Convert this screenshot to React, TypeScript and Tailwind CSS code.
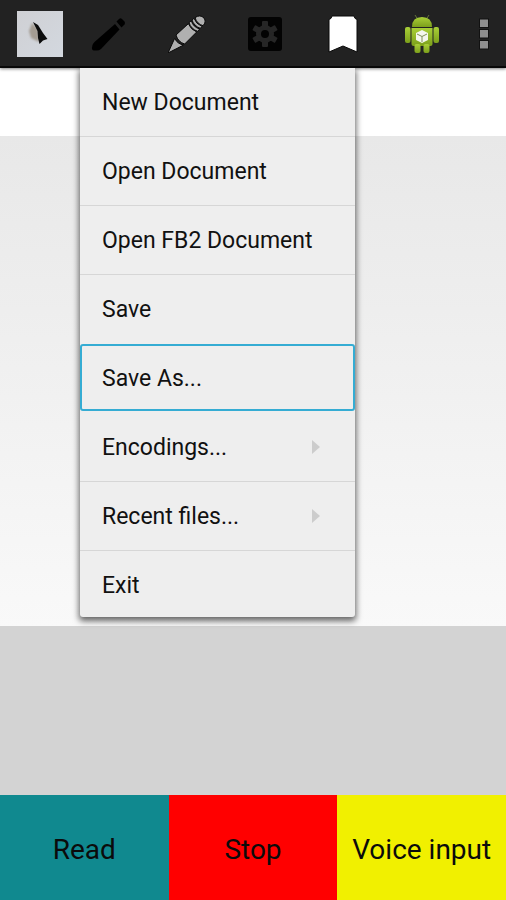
import type { ReactNode } from "react";

type MenuEntry = { label: string; submenu?: boolean; focused?: boolean };

const menuEntries: MenuEntry[] = [
  { label: "New Document" },
  { label: "Open Document" },
  { label: "Open FB2 Document" },
  { label: "Save" },
  { label: "Save As...", focused: true },
  { label: "Encodings...", submenu: true },
  { label: "Recent files...", submenu: true },
  { label: "Exit" },
];

function AppIcon() {
  return (
    <svg viewBox="0 0 46 46" className="size-[46px]" aria-hidden="true">
      <defs>
        <linearGradient id="paper" x1="0" y1="0" x2="1" y2="1">
          <stop offset="0" stopColor="#cfd0d4" />
          <stop offset="1" stopColor="#d3d8df" />
        </linearGradient>
        <filter id="soft" x="-50%" y="-50%" width="200%" height="200%">
          <feGaussianBlur stdDeviation="1.2" />
        </filter>
      </defs>
      <rect width="46" height="46" fill="url(#paper)" />
      <path d="M15 12 L12 20 L14 27 L22 31 L21 18Z" fill="#a49c92" filter="url(#soft)" />
      <path d="M16 11 L21 14 L26 22 L30.500 28 L26 29.500 L22.500 33 L21 27 L20.500 20Z" fill="#0c0c0c" />
    </svg>
  );
}

function BlackPencil() {
  return (
    <svg viewBox="0 0 36 36" className="size-9" aria-hidden="true">
      <g fill="#000">
        <path d="M25 8 L29.500 13.500 L11 33 Q9 34.500 7 34.500 L4 34.500 Q1.500 34 2 31.500 L2.500 29 Q3 27.500 4.500 26Z" />
        <path d="M26.500 5.500 L29 3 Q30.500 1.500 32 3 L34.500 5.500 Q35.500 7 34.500 8.500 L31.500 11.500Z" />
      </g>
    </svg>
  );
}

function GreyPencil() {
  return (
    <svg viewBox="50 43 114 114" className="size-[38px]" aria-hidden="true">
      <g fill="#b0b0b0" stroke="#090909" strokeWidth="3">
        <path d="M50 157 L70 113 Q78 130 97 133Z" />
        <path d="M74 103 L111 69 Q118 86 136 94 L100 130 Q80 124 74 103Z" />
        <path d="M113 66 L120 60 Q125 79 145 85 L139 92 Q119 85 113 66Z" />
        <path d="M122 58 L128 53 Q134 70 152 77 L147 83 Q128 76 122 58Z" />
        <path d="M131 51 Q146 40 158 52 Q166 64 155 75 Q137 70 131 51Z" />
      </g>
    </svg>
  );
}

function Settings() {
  return (
    <svg viewBox="0 0 34 34" className="size-[34px]" aria-hidden="true">
      <rect width="34" height="34" rx="3" fill="#030303" />
      <g fill="#262626">
        <circle cx="17" cy="17" r="9" />
        <rect x="14" y="4" width="6" height="26" rx="1" />
        <rect x="14" y="4" width="6" height="26" rx="1" transform="rotate(60 17 17)" />
        <rect x="14" y="4" width="6" height="26" rx="1" transform="rotate(120 17 17)" />
      </g>
      <circle cx="17" cy="17" r="4" fill="#030303" />
    </svg>
  );
}

function BookmarkIcon() {
  return (
    <svg viewBox="0 0 30 38" className="h-[38px] w-[30px]" aria-hidden="true">
      <path
        d="M4 1 H26 Q26.500 4 29 4.500 V37 L15 31 L1 37 V4.500 Q3.500 4 4 1Z"
        fill="#fff"
        stroke="#080808"
        strokeWidth="1"
      />
    </svg>
  );
}

function Robot() {
  return (
    <svg viewBox="0 0 36 40" className="h-10 w-9" aria-hidden="true">
      <defs>
        <linearGradient id="green" x1="0" y1="0" x2="0" y2="1">
          <stop offset="0" stopColor="#a9cf38" />
          <stop offset="1" stopColor="#7c9f1b" />
        </linearGradient>
      </defs>
      <path d="M11 1 L13.500 5 M25 1 L22.500 5" stroke="#64753a" strokeWidth="1" />
      <g fill="url(#green)">
        <path d="M8 13 Q8 3 18 3 Q28 3 28 13Z" />
        <rect x="1" y="13" width="5.500" height="16" rx="2" />
        <rect x="29.500" y="13" width="5.500" height="16" rx="2" />
        <path d="M7.500 14 H28.500 V30 Q28.500 32 26.500 32 H9.500 Q7.500 32 7.500 30Z" />
        <rect x="10.500" y="30" width="6" height="9" rx="2" />
        <rect x="19.500" y="30" width="6" height="9" rx="2" />
      </g>
      <path d="M18 16 L24 19 V26 L18 29 L12 26 V19Z" fill="#f4f6ee" />
      <path d="M13 20 L18 22.500 L23 20 M18 22.500 V28" fill="none" stroke="#7f8f58" strokeWidth="1" />
    </svg>
  );
}

function Overflow() {
  return (
    <svg viewBox="0 0 10 32" className="h-8 w-[10px]" aria-hidden="true">
      <g fill="#8e8e8e" stroke="#111" strokeWidth="1">
        <rect x="0.500" y="1" width="9" height="8.500" />
        <rect x="0.500" y="11.500" width="9" height="8.500" />
        <rect x="0.500" y="22.500" width="9" height="8.500" />
      </g>
    </svg>
  );
}

function Action({ label, children }: { label: string; children: ReactNode }) {
  return (
    <button type="button" aria-label={label} className="flex flex-1 items-center justify-center">
      {children}
    </button>
  );
}

function FileMenu() {
  return (
    <ul
      role="menu"
      className="absolute top-[68px] left-20 w-[275px] rounded-b-[3px] bg-[#eeeeee] shadow-[0_3px_6px_1px_rgba(0,0,0,0.6)] [clip-path:inset(0_-16px_-16px_-16px)]"
    >
      {menuEntries.map((entry) => (
        <li
          key={entry.label}
          role="none"
          className={
            entry.focused
              ? "h-[69px]"
              : "h-[69px] border-b border-[#d6d6d6] last:h-[66px] last:border-b-0 nth-4:border-transparent"
          }
        >
          <button
            type="button"
            role="menuitem"
            className={
              entry.focused
                ? "flex h-[67px] w-full items-center justify-between rounded-[3px] border-2 border-[#35acd3] pr-8 pl-5 text-left"
                : "flex h-[67px] w-full items-center justify-between pr-[35px] pl-[22px] text-left"
            }
          >
            <span className="pt-0.5">{entry.label}</span>
            {entry.submenu && (
              <svg viewBox="0 0 8 14" className="h-[14px] w-2" aria-hidden="true">
                <path d="M0 0 L8 7 L0 14Z" fill="#cccccc" />
              </svg>
            )}
          </button>
        </li>
      ))}
    </ul>
  );
}

export default function App() {
  return (
    <div className="flex min-h-screen flex-col bg-[#d3d3d3] font-[Roboto,sans-serif] text-[23px] leading-7 text-[#111111]">
      <header className="relative z-10 flex h-[68px] border-b-2 border-[#080808] bg-[#222222] pt-0.5 shadow-[0_1px_3px_rgba(0,0,0,0.5)]">
        <button type="button" aria-label="File" className="flex w-[69px] items-center pl-[17px]">
          <AppIcon />
        </button>
        <Action label="Edit">
          <BlackPencil />
        </Action>
        <Action label="Write">
          <GreyPencil />
        </Action>
        <Action label="Settings">
          <Settings />
        </Action>
        <Action label="Bookmarks">
          <BookmarkIcon />
        </Action>
        <Action label="Android">
          <Robot />
        </Action>
        <button type="button" aria-label="More options" className="flex w-[45px] items-center justify-center">
          <Overflow />
        </button>
        <FileMenu />
      </header>
      <input aria-label="Title" className="h-[68px] w-full bg-white px-4 outline-none" />
      <textarea
        aria-label="Document"
        className="h-[490px] w-full resize-none bg-linear-to-b from-[#e8e8e8] to-[#f9f9f9] p-4 outline-none"
      />
      <footer className="mt-auto grid grid-cols-3 text-[28px] leading-8 text-[#0b0b0b]">
        <button type="button" className="h-[105px] bg-[#10898f] pt-1">
          Read
        </button>
        <button type="button" className="h-[105px] bg-[#ff0000] pt-1">
          Stop
        </button>
        <button type="button" className="h-[105px] bg-[#f1f000] pt-1">
          Voice input
        </button>
      </footer>
    </div>
  );
}
